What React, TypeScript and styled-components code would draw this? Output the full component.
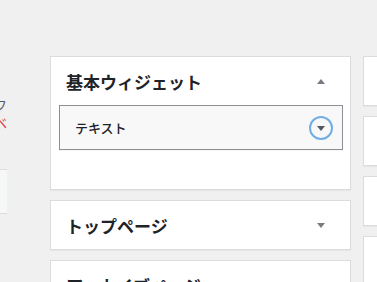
import React from 'react'
import styled, { createGlobalStyle } from 'styled-components'

const GlobalStyle = createGlobalStyle`
  html, body {
    margin: 0;
    padding: 0;
    background: #f0f0f1;
    font-family: "Noto Sans CJK JP", "Noto Sans", sans-serif;
    color: #1d2327;
  }
`

const Page = styled.div`
  display: flex;
  align-items: flex-start;
  width: 377px;
  height: 282px;
  overflow: hidden;
  padding-top: 56px;
  box-sizing: border-box;
`

const LeftColumn = styled.div`
  width: 7px;
  flex-shrink: 0;
  overflow: hidden;
  margin-right: 43px;
  padding-top: 40px;
`

const ClippedLine = styled.div<{ color: string }>`
  display: flex;
  justify-content: flex-end;
  white-space: nowrap;
  font-size: 13px;
  line-height: 18px;
  color: ${props => props.color};
`

const LeftBox = styled.div`
  margin-top: 37px;
  width: 60px;
  margin-left: -54px;
  height: 43px;
  border: 1px solid #dcdcde;
  background: #f6f7f7;
`

const MainColumn = styled.div`
  width: 301px;
  flex-shrink: 0;
  display: flex;
  flex-direction: column;
  gap: 10px;
  margin-right: 12px;
`

const RightColumn = styled.div`
  width: 100px;
  flex-shrink: 0;
  display: flex;
  flex-direction: column;
  gap: 10px;
`

const SidebarPanel = styled.div`
  background: #fff;
  border: 1px solid #dcdcde;
  box-shadow: 0 1px 1px rgba(0, 0, 0, 0.04);
`

const Panel = styled(SidebarPanel)<{ open?: boolean }>`
  padding-bottom: ${props => (props.open ? '39px' : '0')};
`

const StubPanel = styled(SidebarPanel)`
  height: 48px;
`

const PanelHeader = styled.div`
  height: 48px;
  display: flex;
  align-items: center;
  justify-content: space-between;
  padding: 0 25px 0 15px;
`

const PanelTitle = styled.h2`
  margin: 0;
  font-size: 17px;
  font-weight: 700;
  line-height: 1;
  color: #1d2327;
`

const Arrow = styled.span<{ up?: boolean }>`
  width: 0;
  height: 0;
  border-left: 4px solid transparent;
  border-right: 4px solid transparent;
  ${props =>
    props.up
      ? 'border-bottom: 5px solid #787c82;'
      : 'border-top: 5px solid #787c82;'}
`

const Widget = styled.div`
  margin: 0 7px 0 8px;
  height: 43px;
  border: 1px solid #8c8f94;
  background: #f8f8f8;
  box-shadow: 0 1px 1px rgba(0, 0, 0, 0.04);
  display: flex;
  align-items: center;
  justify-content: space-between;
  padding: 0 9px 0 15px;
`

const WidgetTitle = styled.span`
  font-size: 13px;
  font-weight: 500;
  color: #1d2327;
`

const ToggleButton = styled.span`
  width: 24px;
  height: 24px;
  border-radius: 50%;
  border: 2px solid #72aee6;
  display: flex;
  align-items: center;
  justify-content: center;
  padding-top: 1px;
  box-sizing: border-box;

  span {
    border-top-color: #50575e;
  }
`

const App: React.FC = (): JSX.Element => {
  return (
    <>
      <GlobalStyle />
      <Page>
        <LeftColumn>
          <ClippedLine color="#50575e">フ</ClippedLine>
          <ClippedLine color="#d63638">ベ</ClippedLine>
          <LeftBox />
        </LeftColumn>

        <MainColumn>
          <Panel open>
            <PanelHeader>
              <PanelTitle>基本ウィジェット</PanelTitle>
              <Arrow up />
            </PanelHeader>
            <Widget>
              <WidgetTitle>テキスト</WidgetTitle>
              <ToggleButton>
                <Arrow />
              </ToggleButton>
            </Widget>
          </Panel>

          <Panel>
            <PanelHeader>
              <PanelTitle>トップページ</PanelTitle>
              <Arrow />
            </PanelHeader>
          </Panel>

          <Panel>
            <PanelHeader>
              <PanelTitle>アーカイブページ</PanelTitle>
              <Arrow />
            </PanelHeader>
          </Panel>
        </MainColumn>

        <RightColumn>
          <StubPanel />
          <StubPanel />
          <StubPanel />
          <StubPanel />
        </RightColumn>
      </Page>
    </>
  )
}

export default App
